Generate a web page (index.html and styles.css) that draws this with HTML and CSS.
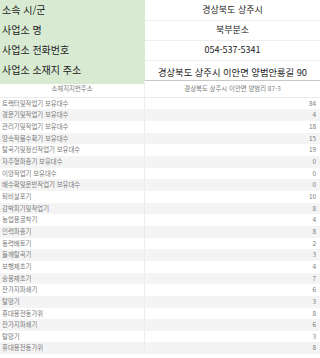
FILE: index.html
```html
<!DOCTYPE html>
<html lang="ko">
<head>
<meta charset="utf-8">
<link rel="stylesheet" href="styles.css">
</head>
<body>
<div class="info">
  <div class="row"><div class="label">소속 시/군</div><div class="value">경상북도 상주시</div></div>
  <div class="row"><div class="label">사업소 명</div><div class="value">북부분소</div></div>
  <div class="row"><div class="label">사업소 전화번호</div><div class="value">054-537-5341</div></div>
  <div class="row"><div class="label">사업소 소재지 주소</div><div class="value addr">경상북도 상주시 이안면 양범안룡길 90</div></div>
</div>
<div class="table">
  <div class="thead"><div class="name">소재지지번주소</div><div class="num">경상북도 상주시 이안면 양범리 87-3</div></div>
  <div class="tr"><div class="name">트랙터및작업기 보유대수</div><div class="num">84</div></div>
  <div class="tr"><div class="name">경운기및작업기 보유대수</div><div class="num">4</div></div>
  <div class="tr"><div class="name">관리기및작업기 보유대수</div><div class="num">18</div></div>
  <div class="tr"><div class="name">땅속작물수확기 보유대수</div><div class="num">15</div></div>
  <div class="tr"><div class="name">탈곡기및정선작업기 보유대수</div><div class="num">19</div></div>
  <div class="tr"><div class="name">자주형파종기 보유대수</div><div class="num">0</div></div>
  <div class="tr"><div class="name">이앙작업기 보유대수</div><div class="num">0</div></div>
  <div class="tr"><div class="name">배수확및운반작업기 보유대수</div><div class="num">0</div></div>
  <div class="tr"><div class="name">퇴비살포기</div><div class="num">10</div></div>
  <div class="tr"><div class="name">감박피기및작업기</div><div class="num">8</div></div>
  <div class="tr"><div class="name">농업용굴착기</div><div class="num">4</div></div>
  <div class="tr"><div class="name">인력파종기</div><div class="num">8</div></div>
  <div class="tr"><div class="name">동력배토기</div><div class="num">2</div></div>
  <div class="tr"><div class="name">들깨탈곡기</div><div class="num">3</div></div>
  <div class="tr"><div class="name">보행제초기</div><div class="num">4</div></div>
  <div class="tr"><div class="name">승용제초기</div><div class="num">7</div></div>
  <div class="tr"><div class="name">잔가지파쇄기</div><div class="num">6</div></div>
  <div class="tr"><div class="name">탈망기</div><div class="num">3</div></div>
  <div class="tr"><div class="name">휴대용전동가위</div><div class="num">8</div></div>
  <div class="tr"><div class="name">잔가지파쇄기</div><div class="num">6</div></div>
  <div class="tr"><div class="name">탈망기</div><div class="num">3</div></div>
  <div class="tr"><div class="name">휴대용전동가위</div><div class="num">8</div></div>
</div>
</body>
</html>
```
FILE: styles.css
```css
html, body {
  margin: 0;
  padding: 0;
  background: #fff;
}
body {
  font-family: "Noto Sans CJK KR", "Noto Sans", sans-serif;
  width: 320px;
  height: 358px;
  overflow: hidden;
}
.info {
  border-bottom: 1px solid #c8c8c8;
}
.row {
  display: grid;
  grid-template-columns: 145px 1fr;
  height: 20px;
}
.label {
  background: #d9ead3;
  color: #222;
  font-size: 10px;
  line-height: 20px;
  padding-left: 2px;
  border-bottom: 1px solid #cfe0c9;
  box-sizing: border-box;
  white-space: nowrap;
}
.row:last-child .label { border-bottom: none; }
.value {
  color: #222;
  font-size: 9px;
  line-height: 20px;
  text-align: center;
  border-bottom: 1px solid #eee;
  box-sizing: border-box;
  white-space: nowrap;
}
.row:last-child .value { border-bottom: none; }
.value.addr {
  font-size: 9.3px;
  line-height: 24px;
}
.table {
  color: #7a7a7a;
  font-size: 6.4px;
}
.thead, .tr {
  display: grid;
  grid-template-columns: 145px 1fr;
}
.thead {
  height: 16.7px;
  line-height: 15px;
  border-bottom: 1px solid #eaeaea;
  box-sizing: border-box;
}
.thead .name, .thead .num {
  text-align: center;
  white-space: nowrap;
}
.thead .name { border-right: 1px solid #f0f0f0; }
.tr {
  height: 11.67px;
  line-height: 11.67px;
}
.tr:nth-child(odd) { background: #f4f4f4; }
.tr .name {
  padding-left: 2px;
  white-space: nowrap;
  border-right: 1px solid #ececec;
}
.tr .num {
  text-align: right;
  padding-right: 4px;
}
```
